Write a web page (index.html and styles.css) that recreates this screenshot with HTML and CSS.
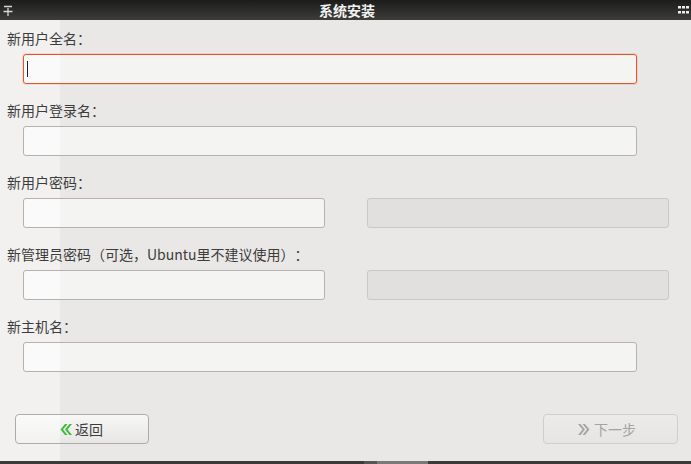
FILE: index.html
```html
<!DOCTYPE html>
<html lang="zh-CN">
<head>
  <meta charset="utf-8">
  <title>系统安装</title>
  <link rel="stylesheet" href="styles.css">
</head>
<body>
  <div class="window">
    <div class="titlebar">
      <svg class="menu-icon" width="10" height="11" viewBox="0 0 10 11">
        <path d="M1 1.5h8M0.5 6.5h9M5 3v8" stroke="#d8d8d8" stroke-width="1.3" fill="none"/>
      </svg>
      <span class="title">系统安装</span>
      <svg class="grid-icon" width="11" height="8" viewBox="0 0 11 8">
        <rect x="0" y="0" width="3" height="2.5" fill="#eee"/>
        <rect x="4" y="0" width="3" height="2.5" fill="#eee"/>
        <rect x="8" y="0" width="3" height="2.5" fill="#eee"/>
        <rect x="0" y="5" width="3" height="2.5" fill="#eee"/>
        <rect x="4" y="5" width="3" height="2.5" fill="#eee"/>
        <rect x="8" y="5" width="3" height="2.5" fill="#eee"/>
      </svg>
    </div>

    <div class="content">
      <div class="field">
        <label>新用户全名：</label>
        <div class="row">
          <div class="entry wide focused"><span class="caret"></span></div>
        </div>
      </div>
      <div class="field">
        <label>新用户登录名：</label>
        <div class="row">
          <div class="entry wide"></div>
        </div>
      </div>
      <div class="field">
        <label>新用户密码：</label>
        <div class="row">
          <div class="entry half"></div>
          <div class="entry half disabled"></div>
        </div>
      </div>
      <div class="field">
        <label>新管理员密码（可选，Ubuntu里不建议使用）：</label>
        <div class="row">
          <div class="entry half"></div>
          <div class="entry half disabled"></div>
        </div>
      </div>
      <div class="field">
        <label>新主机名：</label>
        <div class="row">
          <div class="entry wide"></div>
        </div>
      </div>

      <div class="buttons">
        <button class="btn back">
          <svg width="13" height="13" viewBox="0 0 13 13">
            <path d="M6 1 L1.5 6.5 L6 12 H8.5 L4 6.5 L8.5 1 Z M10.5 1 L6 6.5 L10.5 12 H13 L8.5 6.5 L13 1 Z" fill="#3cbb3a"/>
          </svg>
          返回
        </button>
        <button class="btn disabled">
          <svg width="13" height="13" viewBox="0 0 13 13">
            <path d="M0 1 L4.5 6.5 L0 12 H2.5 L7 6.5 L2.5 1 Z M4.5 1 L9 6.5 L4.5 12 H7 L11.5 6.5 L7 1 Z" fill="#a5a5a5"/>
          </svg>
          下一步
        </button>
      </div>
    </div>

    <div class="bottom-edge"></div>
  </div>
</body>
</html>
```

FILE: styles.css
```css
html, body {
  margin: 0;
  padding: 0;
}

body {
  font-family: "Noto Sans CJK SC", "Noto Sans", sans-serif;
  font-size: 14px;
  color: #3c3c3c;
  background: #e9e8e6;
  text-spacing-trim: space-all;
}

.window {
  width: 691px;
  height: 464px;
  display: flex;
  flex-direction: column;
  overflow: hidden;
}

.titlebar {
  height: 20px;
  flex: none;
  display: flex;
  align-items: center;
  justify-content: space-between;
  padding: 0 2px 0 3px;
  background: linear-gradient(#1c1c1b, #3d3c39);
}

.title {
  color: #f2f2f2;
  font-weight: bold;
  font-size: 14px;
  line-height: 20px;
  margin-left: 3px;
}

.menu-icon {
  margin-top: 1px;
}

/* the window has a lighter band along its left 60px; fixed backgrounds keep it lined up */
.content {
  flex: 1;
  padding: 8px 0 0 7px;
  background: linear-gradient(to right, #f2f1f0 60px, #e9e8e6 60px) fixed;
}

.field {
  margin-bottom: 16px;
}

.field label {
  display: block;
  height: 20px;
  line-height: 20px;
}

.row {
  display: flex;
  gap: 42px;
  margin: 6px 0 0 16px;
}

.entry {
  height: 28px;
  border: 1px solid #b3b2b0;
  border-radius: 3px;
  background: linear-gradient(to right, #fafafa 60px, #f4f4f3 60px) fixed;
  position: relative;
}

.entry.wide {
  width: 612px;
}

.entry.half {
  width: 300px;
}

.entry.disabled {
  background: #e1e0de;
  border-color: #c9c8c6;
}

.entry.focused {
  border-color: #e2562a;
  box-shadow: 0 0 0 1px rgba(226, 86, 42, 0.15);
}

.caret {
  position: absolute;
  left: 3px;
  top: 6px;
  width: 1px;
  height: 16px;
  background: #222;
}

/* margin collapses with the last field's bottom margin */
.buttons {
  display: flex;
  justify-content: space-between;
  margin: 42px 0 0 8px;
  padding-right: 13px;
}

.btn {
  width: 134px;
  height: 30px;
  border: 1px solid #adacaa;
  border-radius: 4px;
  background: linear-gradient(#f7f7f6, #e7e6e4);
  font-family: inherit;
  font-size: 14px;
  color: #3c3c3c;
  display: flex;
  align-items: center;
  justify-content: center;
  gap: 3px;
  padding: 0;
}

.btn.back {
  background:
    linear-gradient(to right, rgba(255, 255, 255, 0.45) 60px, transparent 60px) fixed,
    linear-gradient(#f7f7f6, #e7e6e4);
  padding-right: 2px;
}

.btn.disabled {
  width: 135px;
  color: #a3a3a3;
  border-color: #cfcecc;
  background: linear-gradient(#ecebe9, #e6e5e3);
  padding-right: 7px;
}

.bottom-edge {
  height: 3px;
  flex: none;
  background: linear-gradient(to right, #3b3b3b 364px, #555 364px, #555 377px, #7a7a78 377px, #7a7a78 428px, #3b3b3b 428px);
}
```
